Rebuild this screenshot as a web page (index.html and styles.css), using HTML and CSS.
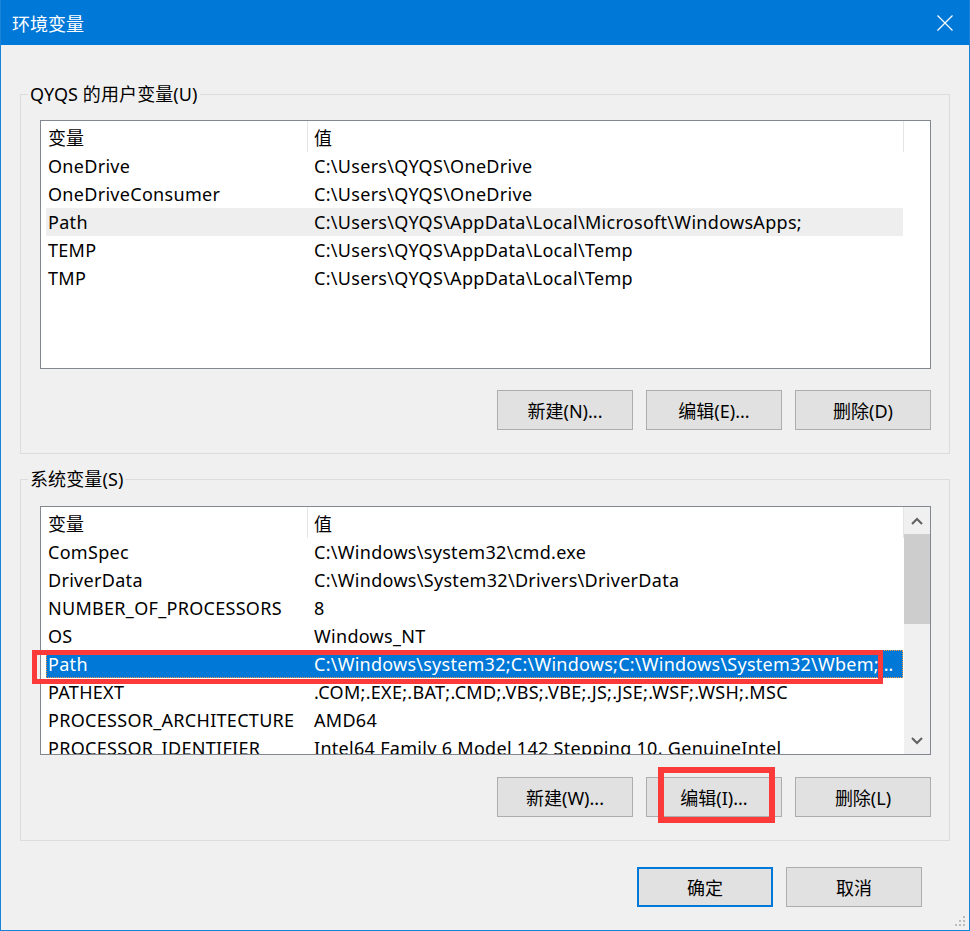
FILE: index.html
```html
<!DOCTYPE html>
<html lang="zh-CN">
<head>
<meta charset="utf-8">
<title>环境变量</title>
<link rel="stylesheet" href="styles.css">
</head>
<body>
<div class="window">
  <div class="titlebar">
    <span class="title">环境变量</span>
    <svg class="close" width="16" height="16" viewBox="0 0 16 16"><path d="M0.5 0.5 L15.5 15.5 M15.5 0.5 L0.5 15.5" stroke="#fff" stroke-width="1.2" fill="none"/></svg>
  </div>
  <div class="content">
    <fieldset class="group group-user">
      <legend>QYQS 的用户变量(U)</legend>
      <div class="list">
        <div class="list-main">
          <div class="list-head">
            <div class="hcell hname">变量</div>
            <div class="hcell hvalue">值</div>
          </div>
          <div class="row"><span class="c1">OneDrive</span><span class="c2">C:\Users\QYQS\OneDrive</span></div>
          <div class="row"><span class="c1">OneDriveConsumer</span><span class="c2">C:\Users\QYQS\OneDrive</span></div>
          <div class="row hover"><span class="c1">Path</span><span class="c2">C:\Users\QYQS\AppData\Local\Microsoft\WindowsApps;</span></div>
          <div class="row"><span class="c1">TEMP</span><span class="c2">C:\Users\QYQS\AppData\Local\Temp</span></div>
          <div class="row"><span class="c1">TMP</span><span class="c2">C:\Users\QYQS\AppData\Local\Temp</span></div>
        </div>
        <div class="list-side"></div>
      </div>
      <div class="btns">
        <button class="btn">新建(N)...</button>
        <button class="btn">编辑(E)...</button>
        <button class="btn">删除(D)</button>
      </div>
    </fieldset>

    <fieldset class="group group-sys">
      <legend>系统变量(S)</legend>
      <div class="list">
        <div class="list-main">
          <div class="list-head">
            <div class="hcell hname">变量</div>
            <div class="hcell hvalue">值</div>
          </div>
          <div class="row"><span class="c1">ComSpec</span><span class="c2">C:\Windows\system32\cmd.exe</span></div>
          <div class="row"><span class="c1">DriverData</span><span class="c2">C:\Windows\System32\Drivers\DriverData</span></div>
          <div class="row"><span class="c1">NUMBER_OF_PROCESSORS</span><span class="c2">8</span></div>
          <div class="row"><span class="c1">OS</span><span class="c2">Windows_NT</span></div>
          <div class="row selected"><span class="c1">Path</span><span class="c2">C:\Windows\system32;C:\Windows;C:\Windows\System32\Wbem;C:\Windows\System32\WindowsPowerShell\v1.0\</span></div>
          <div class="row"><span class="c1">PATHEXT</span><span class="c2">.COM;.EXE;.BAT;.CMD;.VBS;.VBE;.JS;.JSE;.WSF;.WSH;.MSC</span></div>
          <div class="row"><span class="c1">PROCESSOR_ARCHITECTURE</span><span class="c2">AMD64</span></div>
          <div class="row"><span class="c1">PROCESSOR_IDENTIFIER</span><span class="c2">Intel64 Family 6 Model 142 Stepping 10, GenuineIntel</span></div>
        </div>
        <div class="list-side scrollbar">
          <div class="sb-btn"><svg width="12" height="8" viewBox="0 0 12 8"><path d="M1 7 L6 2 L11 7" stroke="#606060" stroke-width="2" fill="none"/></svg></div>
          <div class="sb-track"><div class="sb-thumb"></div></div>
          <div class="sb-btn"><svg width="12" height="8" viewBox="0 0 12 8"><path d="M1 1 L6 6 L11 1" stroke="#606060" stroke-width="2" fill="none"/></svg></div>
        </div>
      </div>
      <div class="btns">
        <button class="btn">新建(W)...</button>
        <button class="btn">编辑(I)...</button>
        <button class="btn">删除(L)</button>
      </div>
    </fieldset>

    <div class="footer">
      <button class="btn default">确定</button>
      <button class="btn">取消</button>
    </div>
  </div>
  <div class="mark mark-row"></div>
  <div class="mark mark-btn"></div>
  <svg class="grip" width="12" height="12" viewBox="0 0 12 12" fill="#bcbcbc">
    <rect x="9" y="1" width="2" height="2"/>
    <rect x="5" y="5" width="2" height="2"/><rect x="9" y="5" width="2" height="2"/>
    <rect x="1" y="9" width="2" height="2"/><rect x="5" y="9" width="2" height="2"/><rect x="9" y="9" width="2" height="2"/>
  </svg>
</div>
</body>
</html>
```

FILE: styles.css
```css
* { box-sizing: border-box; }
html, body { margin: 0; padding: 0; background: #f0f0f0; }
body {
  font-family: "Noto Sans", "Noto Sans CJK SC", sans-serif;
  font-size: 18px;
  color: #000;
}
.window {
  position: relative;
  width: 970px;
  height: 931px;
  background: #f0f0f0;
  border-left: 1px solid #1883d7;
  border-right: 1px solid #1883d7;
  border-bottom: 1px solid #1883d7;
  display: flex;
  flex-direction: column;
}
.titlebar {
  height: 45px;
  background: #0078d7;
  display: flex;
  align-items: center;
  justify-content: space-between;
  padding: 0 16px 0 11px;
  flex: none;
}
.title {
  color: #fff;
  font-family: "Noto Sans CJK SC", sans-serif;
  font-size: 18px;
  line-height: 20px;
}
.close { display: block; margin-top: 1px; }
.content {
  padding: 39px 0 0 19px;
  display: flex;
  flex-direction: column;
}
.group {
  margin: 0;
  width: 930px;
  border: 1px solid #dcdcdc;
  padding: 16px 18px 23px 19px;
  min-inline-size: 0;
}
.group legend {
  padding: 0 2px;
  margin-left: -12px;
  line-height: 20px;
  font-size: 18px;
  letter-spacing: 0.1px;
}
.group-sys {
  margin-top: 15px;
  padding-top: 17px;
}
.list {
  width: 891px;
  height: 249px;
  border: 1px solid #828790;
  background: #fff;
  display: flex;
  overflow: hidden;
}
.list-main {
  width: 863px;
  flex: none;
  overflow: hidden;
}
.list-side {
  flex: 1;
}
.list-head {
  display: flex;
  height: 31px;
}
.hcell {
  border-right: 1px solid #e5e5e5;
  white-space: nowrap;
  line-height: 27px;
  padding-top: 4px;
}
.hname { width: 267px; padding-left: 7px; }
.hvalue { width: 596px; padding-left: 6px; }
.row {
  display: flex;
  height: 28px;
  line-height: 29px;
  margin-left: 5px;
  width: 857px;
  white-space: nowrap;
  letter-spacing: 0.3px;
}
.row.hover { background: #eeeeee; }
.row.selected {
  background: #0078d7;
  color: #fff;
  outline: 1px dotted #ff9a3c;
  outline-offset: -1px;
}
.c1 { width: 261px; padding-left: 2px; flex: none; overflow: hidden; }
.c2 {
  flex: 1;
  min-width: 0;
  padding-left: 7px;
  padding-right: 14px;
  overflow: hidden;
  text-overflow: ellipsis;
}
.row.selected .c2 { padding-right: 3px; letter-spacing: 0.25px; }
.scrollbar {
  background: #f0f0f0;
  display: flex;
  flex-direction: column;
}
.sb-btn {
  height: 27px;
  display: flex;
  align-items: center;
  justify-content: center;
  flex: none;
}
.sb-btn svg { display: block; }
.sb-track { flex: 1; }
.sb-thumb {
  height: 90px;
  background: #cdcdcd;
}
.btns {
  margin-top: 21px;
  width: 891px;
  display: flex;
  justify-content: flex-end;
  gap: 13px;
}
.group-sys .btns { margin-top: 22px; }
.btn {
  width: 136px;
  height: 40px;
  background: #e1e1e1;
  border: 1px solid #adadad;
  font-family: "Noto Sans", "Noto Sans CJK SC", sans-serif;
  font-size: 18px;
  color: #000;
  padding: 0;
  margin: 0;
}
.btn.default { border: 2px solid #0078d7; }
.footer {
  margin-top: 26px;
  padding-right: 47px;
  display: flex;
  justify-content: flex-end;
  gap: 13px;
}
.mark {
  position: absolute;
  border-style: solid;
  border-color: #fc3a3a;
}
.mark-row {
  left: 31px;
  top: 650px;
  width: 851px;
  height: 34px;
  border-width: 5px;
}
.mark-btn {
  left: 657px;
  top: 767px;
  width: 117px;
  height: 56px;
  border-width: 6px;
}
.grip {
  position: absolute;
  right: 3px;
  bottom: 3px;
}
```
